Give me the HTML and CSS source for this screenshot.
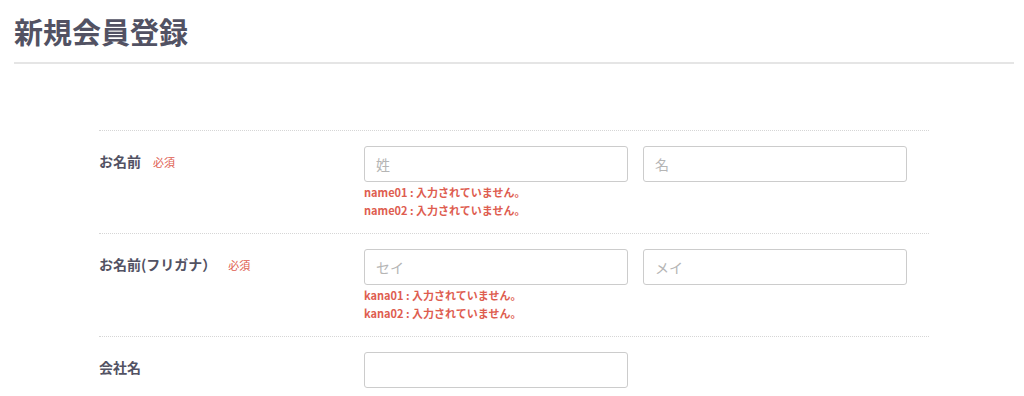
FILE: index.html
```html
<!DOCTYPE html>
<html lang="ja">
<head>
    <meta charset="UTF-8">
    <meta name="viewport" content="width=device-width, initial-scale=1.0">
    <title>新規会員登録</title>
    <link rel="stylesheet" href="styles.css">
</head>
<body>
    <div class="page">
        <h1 class="page-title">新規会員登録</h1>

        <form class="entry-form">
            <dl class="form-row">
                <dt class="form-label">お名前<span class="required">必須</span></dt>
                <dd class="form-field">
                    <div class="input-pair">
                        <input type="text" class="text-input" placeholder="姓">
                        <input type="text" class="text-input" placeholder="名">
                    </div>
                    <p class="error-message">name01 : 入力されていません。</p>
                    <p class="error-message">name02 : 入力されていません。</p>
                </dd>
            </dl>
            <dl class="form-row">
                <dt class="form-label">お名前(フリガナ）<span class="required">必須</span></dt>
                <dd class="form-field">
                    <div class="input-pair">
                        <input type="text" class="text-input" placeholder="セイ">
                        <input type="text" class="text-input" placeholder="メイ">
                    </div>
                    <p class="error-message">kana01 : 入力されていません。</p>
                    <p class="error-message">kana02 : 入力されていません。</p>
                </dd>
            </dl>
            <dl class="form-row">
                <dt class="form-label">会社名</dt>
                <dd class="form-field">
                    <div class="input-pair">
                        <input type="text" class="text-input">
                    </div>
                </dd>
            </dl>
        </form>
    </div>
</body>
</html>
```

FILE: styles.css
```css
body {
    font-family: "Noto Sans CJK JP", "Noto Sans", sans-serif;
    margin: 0;
    padding: 0;
    background-color: #ffffff;
    color: #525263;
}
.page {
    padding: 0 10px 0 14px;
}
.page-title {
    margin: 0;
    padding: 14px 0 13px;
    font-size: 29px;
    line-height: 35px;
    font-weight: bold;
    border-bottom: 2px solid #e5e5e5;
}
.entry-form {
    width: 830px;
    margin: 66px auto 0;
    border-top: 1px dotted #d6d6d6;
}
.form-row {
    display: flex;
    margin: 0;
    padding: 15px 0 14px;
    border-bottom: 1px dotted #d6d6d6;
}
.form-label {
    width: 265px;
    flex-shrink: 0;
    font-size: 14px;
    font-weight: bold;
    line-height: 30px;
}
.required {
    margin-left: 12px;
    font-size: 11px;
    font-weight: normal;
    color: #de5d50;
}
.form-field {
    margin: 0;
    flex: 1;
}
.input-pair {
    display: flex;
    gap: 15px;
}
.text-input {
    box-sizing: border-box;
    width: 264px;
    height: 36px;
    padding: 0 11px;
    border: 1px solid #ccc;
    border-radius: 3px;
    font-family: inherit;
    font-size: 14px;
    color: #525263;
    background-color: #fff;
}
.text-input::placeholder {
    color: #b5b5b5;
}
.error-message {
    margin: 0;
    font-size: 11px;
    font-weight: bold;
    line-height: 18px;
    color: #de5d50;
}
.error-message:first-of-type {
    margin-top: 1px;
}
```
